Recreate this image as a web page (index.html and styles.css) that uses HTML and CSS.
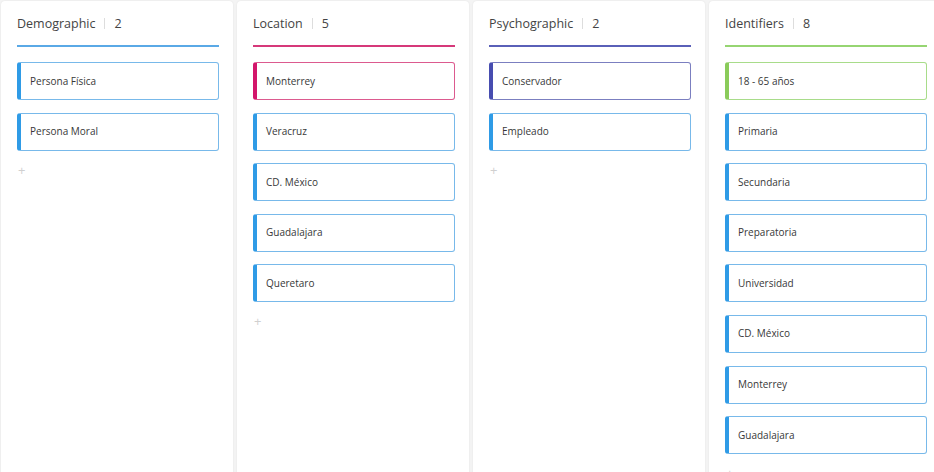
FILE: index.html
```html
<!DOCTYPE html>
<html lang="es">
<head>
<meta charset="utf-8">
<title>Board</title>
<link rel="stylesheet" href="styles.css">
</head>
<body>
<div class="board">
  <section class="column">
    <header class="col-head blue"><span class="title">Demographic</span><span class="sep"></span><span class="count">2</span></header>
    <div class="cards">
      <div class="card">Persona Física</div>
      <div class="card">Persona Moral</div>
    </div>
    <div class="add">+</div>
  </section>
  <section class="column">
    <header class="col-head pink"><span class="title">Location</span><span class="sep"></span><span class="count">5</span></header>
    <div class="cards">
      <div class="card pink">Monterrey</div>
      <div class="card">Veracruz</div>
      <div class="card">CD. México</div>
      <div class="card">Guadalajara</div>
      <div class="card">Queretaro</div>
    </div>
    <div class="add">+</div>
  </section>
  <section class="column">
    <header class="col-head indigo"><span class="title">Psychographic</span><span class="sep"></span><span class="count">2</span></header>
    <div class="cards">
      <div class="card indigo">Conservador</div>
      <div class="card">Empleado</div>
    </div>
    <div class="add">+</div>
  </section>
  <section class="column">
    <header class="col-head green"><span class="title">Identifiers</span><span class="sep"></span><span class="count">8</span></header>
    <div class="cards">
      <div class="card green">18 - 65 años</div>
      <div class="card">Primaria</div>
      <div class="card">Secundaria</div>
      <div class="card">Preparatoria</div>
      <div class="card">Universidad</div>
      <div class="card">CD. México</div>
      <div class="card">Monterrey</div>
      <div class="card">Guadalajara</div>
    </div>
    <div class="add">+</div>
  </section>
</div>
</body>
</html>
```

FILE: styles.css
```css
html, body {
  margin: 0;
  padding: 0;
  height: 100%;
  overflow: hidden;
  background: #f4f4f4;
  font-family: "Open Sans", "Liberation Sans", sans-serif;
}

.board {
  display: flex;
  gap: 4px;
  padding: 1px 0 0 1px;
  height: 100%;
  box-sizing: border-box;
}

.column {
  flex: 0 0 232px;
  background: #fff;
  border-radius: 4px 4px 0 0;
  box-shadow: 0 0 2px rgba(0, 0, 0, 0.08);
  padding: 0 14px 0 16px;
  box-sizing: border-box;
  min-height: 600px;
}

.col-head {
  height: 44px;
  display: flex;
  align-items: center;
  border-bottom: 2px solid #5aa9e6;
  color: #444;
  font-size: 12.5px;
}
.col-head.pink { border-color: #d6397a; }
.col-head.indigo { border-color: #5a60b8; }
.col-head.green { border-color: #96d572; }

.sep {
  width: 1px;
  height: 11px;
  background: #ddd;
  margin: 0 9px;
}

.cards {
  display: flex;
  flex-direction: column;
  gap: 12.6px;
  margin-top: 15px;
}

.card {
  height: 38px;
  box-sizing: border-box;
  display: flex;
  align-items: center;
  border: 1px solid #78b9ea;
  border-left: 4px solid #2f9be6;
  border-radius: 3px;
  padding: 0 0 1px 9px;
  font-size: 10px;
  color: #383838;
  background: #fff;
}
.card.pink { border-color: #dc5a8f; border-left-color: #d3166b; }
.card.indigo { border-color: #7b7fc0; border-left-color: #474db0; }
.card.green { border-color: #a8dc8a; border-left-color: #8acb5a; }

.add {
  margin-top: 9px;
  padding-left: 1px;
  font-size: 13px;
  line-height: 20px;
  color: #d0d0d0;
}
```
